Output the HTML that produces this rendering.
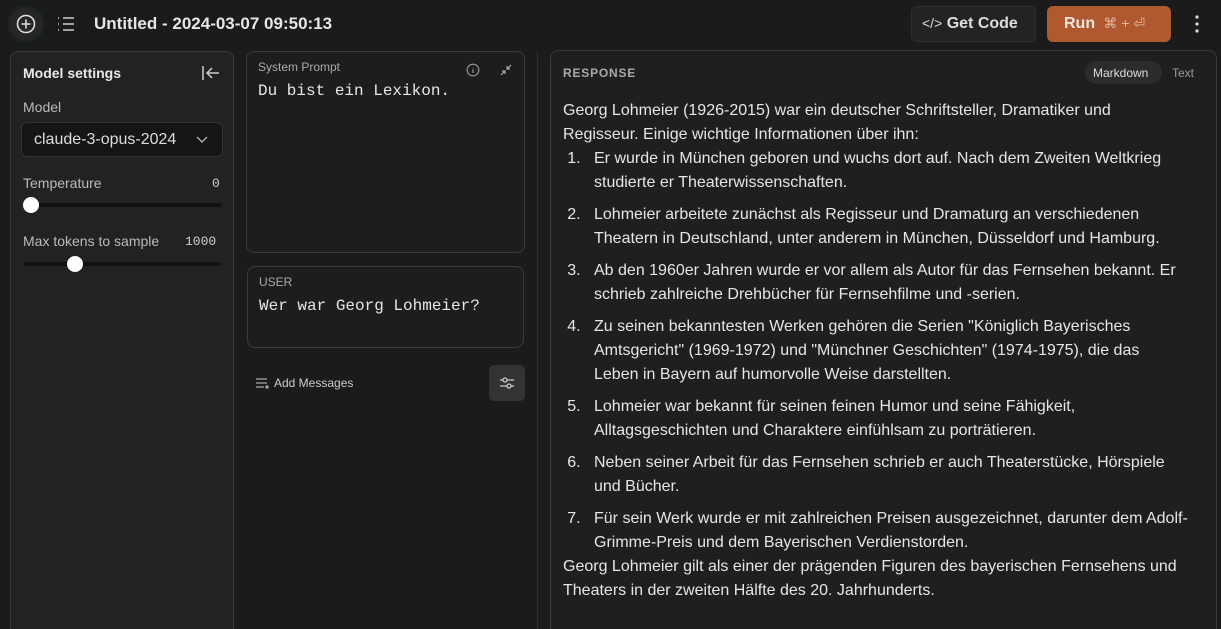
<!DOCTYPE html>
<html style="height:629px;overflow:hidden"><head><meta charset="utf-8"><style>
*{box-sizing:border-box;margin:0;padding:0}
body{width:1221px;height:629px;background:#1b1b1b;color:#e8e8e8;font-family:"Liberation Sans",sans-serif;position:relative;overflow:hidden}
.abs{position:absolute}
.mono{font-family:"Liberation Mono",monospace}
.panel{position:absolute;background:#222;border:1px solid #3a3a3a;border-radius:8px}
.resp p,.resp li{font-size:16px;line-height:24px;color:#e6e6e6;white-space:nowrap}
.resp ol{margin-left:22px;padding-left:0}
.resp li{padding-left:9px;margin-bottom:8px}
</style></head><body>
<div class="abs" style="left:10px;top:8px;width:32px;height:32px;border-radius:16px;background:#262626;box-shadow:0 0 6px #1f3a30"></div>
<svg class="abs" style="left:15px;top:13px" width="22" height="22" viewBox="0 0 22 22" fill="none" stroke="#ddd" stroke-width="1.6"><circle cx="11" cy="11" r="8.5"/><path d="M11 6.5v9M6.5 11h9"/></svg>
<svg class="abs" style="left:55px;top:14px" width="22" height="20" viewBox="0 0 22 20" fill="none" stroke="#ccc" stroke-width="1.6"><path d="M3 4h1M3 10h1M3 16h1M8 4h11M8 10h11M8 16h11"/></svg>
<div class="abs" style="left:94px;top:14px;font-size:17px;font-weight:bold;color:#e6e6e6">Untitled - 2024-03-07 09:50:13</div>
<div class="abs" style="left:911px;top:6px;width:125px;height:36px;border:1px solid #2e2e2e;background:#232323;border-radius:6px"></div>
<div class="abs" style="left:922px;top:15px;font-size:16px;font-weight:bold;color:#ddd"><span style="font-weight:normal;font-size:14px">&lt;/&gt;</span> Get Code</div>
<div class="abs" style="left:1047px;top:6px;width:124px;height:36px;background:#b05830;border-radius:6px"></div>
<div class="abs" style="left:1064px;top:15px;font-size:16px;font-weight:bold;color:#f3e6de">Run <span style="font-weight:normal;font-size:14px;color:#e6b8a2">&nbsp;⌘ + ⏎</span></div>
<svg class="abs" style="left:1193px;top:14px" width="8" height="20"><circle cx="4" cy="3" r="1.6" fill="#ddd"/><circle cx="4" cy="10" r="1.6" fill="#ddd"/><circle cx="4" cy="17" r="1.6" fill="#ddd"/></svg>

<div class="panel" style="left:10px;top:51px;width:224px;height:600px"></div>
<div class="abs" style="left:23px;top:65px;font-size:14px;font-weight:bold">Model settings</div>
<svg class="abs" style="left:200px;top:63px" width="22" height="20" fill="none" stroke="#ccc" stroke-width="1.5"><path d="M3 3v14M19 10H7M12 5l-5 5 5 5"/></svg>
<div class="abs" style="left:23px;top:99px;font-size:14px;color:#bbb">Model</div>
<div class="abs" style="left:21px;top:122px;width:202px;height:35px;background:#151515;border:1px solid #333;border-radius:6px;overflow:hidden">
<div style="position:absolute;left:12px;top:8px;font-size:16px;color:#ddd;white-space:nowrap;width:150px;overflow:hidden">claude-3-opus-2024</div>
<svg style="position:absolute;left:173px;top:11px" width="14" height="12" fill="none" stroke="#aaa" stroke-width="1.5"><path d="M2 3l5 5 5-5"/></svg></div>
<div class="abs" style="left:23px;top:175px;font-size:14px;color:#bbb">Temperature</div>
<div class="abs mono" style="left:212px;top:176px;font-size:13px;color:#ccc">0</div>
<div class="abs" style="left:23px;top:203px;width:198px;height:4px;background:#111;border-radius:2px"></div>
<div class="abs" style="left:23px;top:197px;width:16px;height:16px;background:#fff;border-radius:8px"></div>
<div class="abs" style="left:23px;top:233px;font-size:14px;color:#bbb">Max tokens to sample</div>
<div class="abs mono" style="left:185px;top:234px;font-size:13px;color:#ccc">1000</div>
<div class="abs" style="left:23px;top:262px;width:198px;height:4px;background:#111;border-radius:2px"></div>
<div class="abs" style="left:67px;top:256px;width:16px;height:16px;background:#fff;border-radius:8px"></div>

<div class="abs" style="left:246px;top:51px;width:279px;height:202px;border:1px solid #3a3a3a;border-radius:8px;background:#1d1d1d"></div>
<div class="abs" style="left:258px;top:60px;font-size:12px;color:#aaa">System Prompt</div>
<svg class="abs" style="left:466px;top:63px" width="14" height="14" fill="none" stroke="#999" stroke-width="1.1"><circle cx="7" cy="7" r="5.8"/><path d="M7 6v4M7 4v.5"/></svg>
<svg class="abs" style="left:499px;top:63px" width="14" height="14" fill="none" stroke="#aaa" stroke-width="1.2"><path d="M12 2L8 6M8 3v3h3M2 12l4-4M3 8h3v3"/></svg>
<div class="abs mono" style="left:258px;top:82px;font-size:16px;color:#e6e6e6">Du bist ein Lexikon.</div>
<div class="abs" style="left:247px;top:266px;width:277px;height:82px;border:1px solid #3a3a3a;border-radius:8px;background:#1d1d1d"></div>
<div class="abs" style="left:259px;top:275px;font-size:12px;color:#aaa">USER</div>
<div class="abs mono" style="left:259px;top:297px;font-size:16px;color:#e6e6e6">Wer war Georg Lohmeier?</div>
<svg class="abs" style="left:255px;top:377px" width="14" height="12" fill="none" stroke="#aaa" stroke-width="1.3"><path d="M1 2h11M1 6h11M1 10h8"/><circle cx="12" cy="10" r="1" fill="#aaa"/></svg>
<div class="abs" style="left:274px;top:376px;font-size:12px;color:#ccc">Add Messages</div>
<div class="abs" style="left:489px;top:365px;width:36px;height:36px;background:#333;border-radius:5px"></div>
<svg class="abs" style="left:498px;top:374px" width="18" height="18" fill="none" stroke="#ccc" stroke-width="1.3"><path d="M2 6h14M2 12h14"/><circle cx="7" cy="6" r="2" fill="#333"/><circle cx="11" cy="12" r="2" fill="#333"/></svg>
<div class="abs" style="left:537px;top:51px;width:1px;height:580px;background:#2e2e2e"></div>

<div class="panel" style="left:550px;top:50px;width:667px;height:600px;background:#1f1f1f"></div>
<div class="abs" style="left:563px;top:66px;font-size:12px;font-weight:bold;letter-spacing:0.8px;color:#aaa">RESPONSE</div>
<div class="abs" style="left:1085px;top:61px;width:77px;height:23px;background:#2c2c2c;border-radius:12px"></div>
<div class="abs" style="left:1093px;top:66px;font-size:12px;color:#ddd">Markdown</div>
<div class="abs" style="left:1172px;top:66px;font-size:12px;color:#999">Text</div>
<div class="abs resp" style="left:563px;top:99px;width:640px">
<p>Georg Lohmeier (1926-2015) war ein deutscher Schriftsteller, Dramatiker und<br>Regisseur. Einige wichtige Informationen über ihn:</p>
<ol>
<li>Er wurde in München geboren und wuchs dort auf. Nach dem Zweiten Weltkrieg<br>studierte er Theaterwissenschaften.</li>
<li>Lohmeier arbeitete zunächst als Regisseur und Dramaturg an verschiedenen<br>Theatern in Deutschland, unter anderem in München, Düsseldorf und Hamburg.</li>
<li>Ab den 1960er Jahren wurde er vor allem als Autor für das Fernsehen bekannt. Er<br>schrieb zahlreiche Drehbücher für Fernsehfilme und -serien.</li>
<li>Zu seinen bekanntesten Werken gehören die Serien "Königlich Bayerisches<br>Amtsgericht" (1969-1972) und "Münchner Geschichten" (1974-1975), die das<br>Leben in Bayern auf humorvolle Weise darstellten.</li>
<li>Lohmeier war bekannt für seinen feinen Humor und seine Fähigkeit,<br>Alltagsgeschichten und Charaktere einfühlsam zu porträtieren.</li>
<li>Neben seiner Arbeit für das Fernsehen schrieb er auch Theaterstücke, Hörspiele<br>und Bücher.</li>
<li style="margin-bottom:0">Für sein Werk wurde er mit zahlreichen Preisen ausgezeichnet, darunter dem Adolf-<br>Grimme-Preis und dem Bayerischen Verdienstorden.</li>
</ol>
<p>Georg Lohmeier gilt als einer der prägenden Figuren des bayerischen Fernsehens und<br>Theaters in der zweiten Hälfte des 20. Jahrhunderts.</p>
</div>
</body></html>
